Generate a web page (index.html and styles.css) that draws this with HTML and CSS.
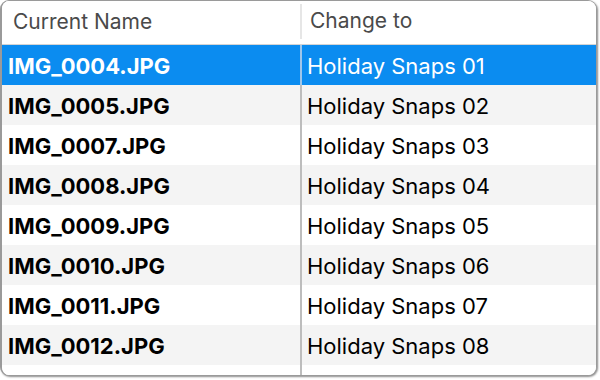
FILE: index.html
```html
<!DOCTYPE html>
<html>
<head>
<meta charset="utf-8">
<link rel="stylesheet" href="styles.css">
</head>
<body>
<div class="frame">
  <div class="header">
    <div class="hcell first">Current Name</div>
    <div class="hcell second">Change to</div>
  </div>
  <div class="rows">
    <div class="row selected"><div class="cell name">IMG_0004.JPG</div><div class="cell new">Holiday Snaps 01</div></div>
    <div class="row"><div class="cell name">IMG_0005.JPG</div><div class="cell new">Holiday Snaps 02</div></div>
    <div class="row"><div class="cell name">IMG_0007.JPG</div><div class="cell new">Holiday Snaps 03</div></div>
    <div class="row"><div class="cell name">IMG_0008.JPG</div><div class="cell new">Holiday Snaps 04</div></div>
    <div class="row"><div class="cell name">IMG_0009.JPG</div><div class="cell new">Holiday Snaps 05</div></div>
    <div class="row"><div class="cell name">IMG_0010.JPG</div><div class="cell new">Holiday Snaps 06</div></div>
    <div class="row"><div class="cell name">IMG_0011.JPG</div><div class="cell new">Holiday Snaps 07</div></div>
    <div class="row"><div class="cell name">IMG_0012.JPG</div><div class="cell new">Holiday Snaps 08</div></div>
    <div class="row filler"><div class="cell name"></div><div class="cell new"></div></div>
  </div>
</div>
</body>
</html>
```
FILE: styles.css
```css
html, body {
  margin: 0;
  padding: 0;
  background: #ffffff;
}
body {
  font-family: Inter, "Noto Sans", sans-serif;
  width: 600px;
  height: 380px;
  overflow: hidden;
}
.frame {
  box-sizing: border-box;
  width: 597px;
  height: 376px;
  border: 1px solid #9a9a9a;
  border-left-width: 2px;
  border-radius: 9px;
  box-shadow: 1px 1px 2px rgba(0,0,0,0.45);
  background: #ffffff;
  overflow: hidden;
  display: flex;
  flex-direction: column;
}
.header {
  display: grid;
  grid-template-columns: 298px 1fr;
  height: 43px;
  border-bottom: 1px solid #d4d4d4;
  background: #ffffff;
  flex: none;
}
.hcell {
  display: flex;
  align-items: center;
  font-size: 21px;
  color: #4a4a4a;
  padding-bottom: 2px;
}
.hcell.first {
  padding-left: 11px;
}
.hcell.second {
  padding-left: 8px;
  border-left: 2px solid #e6e6e6;
  margin: 3px 0 5px 0;
}
.rows {
  display: flex;
  flex-direction: column;
  flex: 1;
}
.row {
  display: grid;
  grid-template-columns: 298px 1fr;
  height: 40px;
  flex: none;
}
.row:nth-child(even) {
  background: #f4f4f4;
}
.row.filler {
  flex: 1;
  height: auto;
  background: #ffffff;
}
.cell {
  display: flex;
  align-items: center;
  font-size: 22px;
  color: #000000;
  padding-top: 1px;
}
.cell.name {
  font-weight: 700;
  padding-left: 6px;
}
.cell.new {
  padding-left: 5px;
  border-left: 2px solid #bdbdbd;
}
.row.selected {
  background: #0b8cf0;
}
.row.selected .cell {
  color: #ffffff;
}
.row.selected .cell.new {
  border-left-color: #9fc6ea;
}
```
